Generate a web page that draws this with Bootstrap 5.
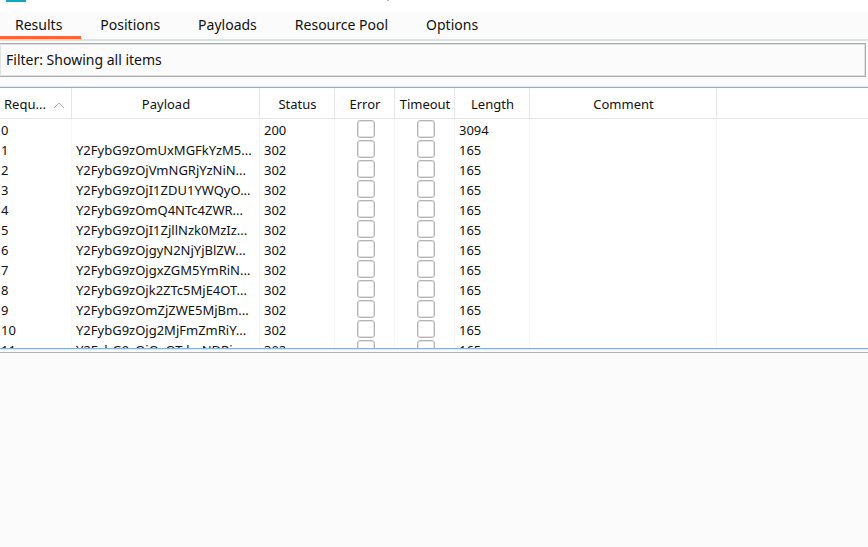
<!DOCTYPE html>
<html lang="en">
<head>
<meta charset="utf-8">
<meta name="viewport" content="width=device-width, initial-scale=1">
<title>Intruder attack results</title>
<link rel="stylesheet" href="https://cdn.jsdelivr.net/npm/bootstrap@5.3.0/dist/css/bootstrap.min.css">
<style>
body { font-family: "Noto Sans", "Open Sans", sans-serif; font-size: 13px; line-height: 20px; color: #111; background: #fbfbfb; }
.titlebar { height: 12px; }
.app-icon { width: 20px; height: 2px; background: #11a6bc; margin-left: 6px; }
.title-edge { width: 2px; height: 1px; background: #b9b9c8; margin-left: 361px; }
.attack-tabs { border-bottom: 2px solid #dde3e1; height: 29px; font-size: 14px; }
.attack-tabs .nav-link { color: #111; padding: 3px 19px 0; height: 27px; border-bottom: 3px solid transparent; border-radius: 0; }
.attack-tabs .nav-item:first-child .nav-link { padding-left: 15px; }
.attack-tabs .nav-link.active { border-bottom-color: #ff6633; }
.filter-bar { font-size: 14px; margin: 2px 2px 0 0; height: 34px; padding: 0 6px; border: 1px solid #a9acab; border-left: 0; box-shadow: inset 0 0 0 1px #e0e2e1; background: #fbfbfb; color: inherit; }
.results-pane { flex: 260 1 0; margin-top: 10px; border-top: 1px solid #8db2d8; border-bottom: 1px solid #8db2d8; box-shadow: 0 0 0 1px #dce8f5; }
.detail-pane { flex: 194 1 0; margin-top: 3px; border-top: 1px solid #b8b3b3; }
.results { table-layout: fixed; border-collapse: separate; border-spacing: 0; }
.results th, .results td { padding: 0 0 0 4px; height: 20px; border-right: 1px solid #f7f7f7; white-space: nowrap; overflow: hidden; }
.results th { height: 31px; padding: 2px 0 0 1px; font-weight: 400; text-align: center; border-right-color: #e6e6e6; border-bottom: 1px solid #e6e6e6; }
.results th:first-child { padding-left: 4px; text-align: left; }
.results th svg { margin-left: 4px; }
.results td:first-child { padding-left: 1px; }
.results th:last-child, .results td:last-child { border-right: 0; }
.results tbody tr:first-child td { height: 21px; padding-top: 1px; }
.results .form-check-input { width: 18px; height: 18px; margin: 0; border: 1px solid #b5b5b5; border-radius: 3px; background-color: #fff; box-shadow: inset 0 0 0 1px #e2e2e2; }
.results tbody tr .tick { padding: 0 0 0 2px; text-align: center; line-height: 0; vertical-align: top; }
.results tbody tr:first-child .tick { padding-top: 1px; }
.c-req { width: 72px; } .c-payload { width: 188px; } .c-status { width: 75px; }
.c-flag { width: 60px; } .c-length { width: 75px; } .c-comment { width: 187px; }
</style>
<script src="https://cdn.jsdelivr.net/npm/bootstrap@5.3.0/dist/js/bootstrap.bundle.min.js"></script>
</head>
<body class="vh-100 d-flex flex-column overflow-hidden">
<header class="titlebar bg-white d-flex flex-shrink-0"><div class="app-icon"></div><div class="title-edge"></div></header>
<ul class="nav attack-tabs flex-nowrap flex-shrink-0">
<li class="nav-item"><a class="nav-link active" aria-current="page" href="#results">Results</a></li>
<li class="nav-item"><a class="nav-link" href="#positions">Positions</a></li>
<li class="nav-item"><a class="nav-link" href="#payloads">Payloads</a></li>
<li class="nav-item"><a class="nav-link" href="#pool">Resource Pool</a></li>
<li class="nav-item"><a class="nav-link" href="#options">Options</a></li>
</ul>
<button type="button" class="filter-bar text-start flex-shrink-0">Filter: Showing all items</button>
<main id="results" class="results-pane bg-white overflow-hidden">
<table class="results w-100">
<colgroup><col class="c-req"><col class="c-payload"><col class="c-status"><col class="c-flag"><col class="c-flag"><col class="c-length"><col class="c-comment"><col></colgroup>
<thead><tr><th>Requ... <svg width="12" height="7" viewBox="0 0 12 7" aria-hidden="true"><path d="M1 6 6 1l5 5" fill="none" stroke="#b4b4b4"/></svg></th><th>Payload</th><th>Status</th><th>Error</th><th>Timeout</th><th>Length</th><th>Comment</th><th></th></tr></thead>
<tbody>
<tr><td>0</td><td></td><td>200</td><td class="tick"><input class="form-check-input" type="checkbox" aria-label="Error 0"></td><td class="tick"><input class="form-check-input" type="checkbox" aria-label="Timeout 0"></td><td>3094</td><td></td><td></td></tr>
<tr><td>1</td><td>Y2FybG9zOmUxMGFkYzM5...</td><td>302</td><td class="tick"><input class="form-check-input" type="checkbox" aria-label="Error 1"></td><td class="tick"><input class="form-check-input" type="checkbox" aria-label="Timeout 1"></td><td>165</td><td></td><td></td></tr>
<tr><td>2</td><td>Y2FybG9zOjVmNGRjYzNiN...</td><td>302</td><td class="tick"><input class="form-check-input" type="checkbox" aria-label="Error 2"></td><td class="tick"><input class="form-check-input" type="checkbox" aria-label="Timeout 2"></td><td>165</td><td></td><td></td></tr>
<tr><td>3</td><td>Y2FybG9zOjI1ZDU1YWQyO...</td><td>302</td><td class="tick"><input class="form-check-input" type="checkbox" aria-label="Error 3"></td><td class="tick"><input class="form-check-input" type="checkbox" aria-label="Timeout 3"></td><td>165</td><td></td><td></td></tr>
<tr><td>4</td><td>Y2FybG9zOmQ4NTc4ZWR...</td><td>302</td><td class="tick"><input class="form-check-input" type="checkbox" aria-label="Error 4"></td><td class="tick"><input class="form-check-input" type="checkbox" aria-label="Timeout 4"></td><td>165</td><td></td><td></td></tr>
<tr><td>5</td><td>Y2FybG9zOjI1ZjllNzk0MzIz...</td><td>302</td><td class="tick"><input class="form-check-input" type="checkbox" aria-label="Error 5"></td><td class="tick"><input class="form-check-input" type="checkbox" aria-label="Timeout 5"></td><td>165</td><td></td><td></td></tr>
<tr><td>6</td><td>Y2FybG9zOjgyN2NjYjBlZW...</td><td>302</td><td class="tick"><input class="form-check-input" type="checkbox" aria-label="Error 6"></td><td class="tick"><input class="form-check-input" type="checkbox" aria-label="Timeout 6"></td><td>165</td><td></td><td></td></tr>
<tr><td>7</td><td>Y2FybG9zOjgxZGM5YmRiN...</td><td>302</td><td class="tick"><input class="form-check-input" type="checkbox" aria-label="Error 7"></td><td class="tick"><input class="form-check-input" type="checkbox" aria-label="Timeout 7"></td><td>165</td><td></td><td></td></tr>
<tr><td>8</td><td>Y2FybG9zOjk2ZTc5MjE4OT...</td><td>302</td><td class="tick"><input class="form-check-input" type="checkbox" aria-label="Error 8"></td><td class="tick"><input class="form-check-input" type="checkbox" aria-label="Timeout 8"></td><td>165</td><td></td><td></td></tr>
<tr><td>9</td><td>Y2FybG9zOmZjZWE5MjBm...</td><td>302</td><td class="tick"><input class="form-check-input" type="checkbox" aria-label="Error 9"></td><td class="tick"><input class="form-check-input" type="checkbox" aria-label="Timeout 9"></td><td>165</td><td></td><td></td></tr>
<tr><td>10</td><td>Y2FybG9zOjg2MjFmZmRiY...</td><td>302</td><td class="tick"><input class="form-check-input" type="checkbox" aria-label="Error 10"></td><td class="tick"><input class="form-check-input" type="checkbox" aria-label="Timeout 10"></td><td>165</td><td></td><td></td></tr>
<tr><td>11</td><td>Y2FybG9zOjQyOTdmNDRi...</td><td>302</td><td class="tick"><input class="form-check-input" type="checkbox" aria-label="Error 11"></td><td class="tick"><input class="form-check-input" type="checkbox" aria-label="Timeout 11"></td><td>165</td><td></td><td></td></tr>
</tbody>
</table>
</main>
<section class="detail-pane" aria-label="Request details"></section>
</body>
</html>
